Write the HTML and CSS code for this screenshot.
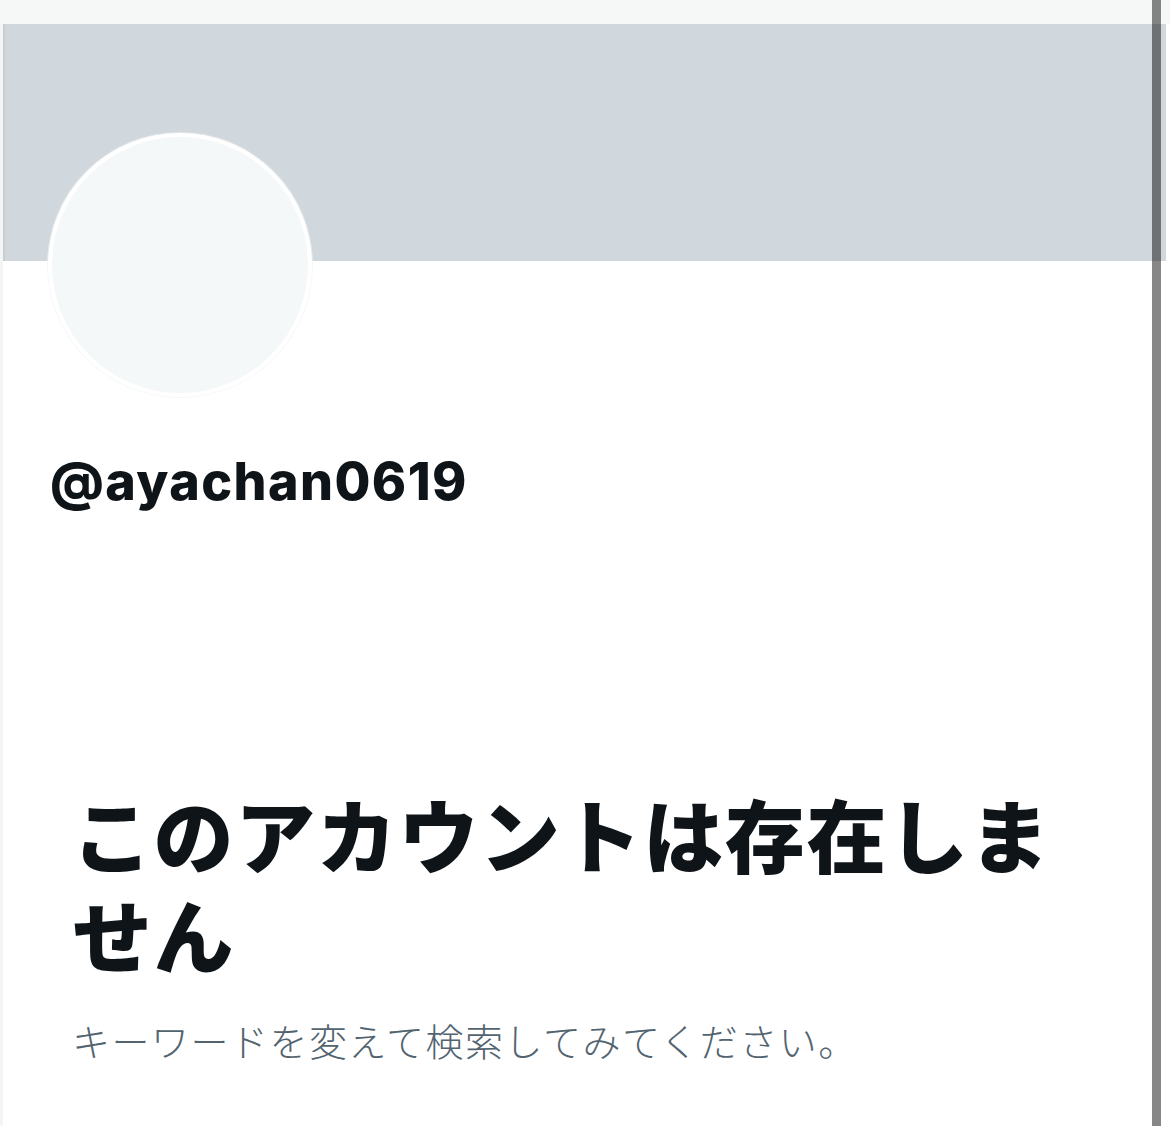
FILE: index.html
```html
<!DOCTYPE html>
<html lang="ja">
<head>
<meta charset="utf-8">
<title>プロフィール</title>
<link rel="stylesheet" href="styles.css">
</head>
<body>
<div class="topbar"></div>
<main class="profile">
  <div class="banner"></div>
  <div class="avatar"></div>
  <div class="handle">@ayachan0619</div>
  <section class="notfound">
    <h1 class="nf-title">このアカウントは存在しません</h1>
    <p class="nf-text">キーワードを変えて検索してみてください。</p>
  </section>
</main>
<div class="scrollbar"></div>
</body>
</html>
```
FILE: styles.css
```css
html, body {
  margin: 0;
  padding: 0;
  background: #ffffff;
}
body {
  width: 1170px;
  height: 1126px;
  overflow: hidden;
  position: relative;
  font-family: "Inter", "Liberation Sans", "Noto Sans CJK JP", sans-serif;
  color: #0f1419;
}
.topbar {
  height: 24px;
  background: #f5f8f7;
}
.profile {
  border-left: 3px solid #f4f6f6;
  margin-right: 4px;
  min-height: 1102px;
}
.banner {
  height: 237px;
  background: #d0d7dd;
  border-left: 2px solid #c9ced3;
}
.avatar {
  width: 256px;
  height: 256px;
  margin-top: -128px;
  margin-left: 45px;
  border-radius: 50%;
  border: 4px solid #ffffff;
  background: #f5f8f8;
  box-shadow: 0 0 0 1px rgba(240, 243, 244, 0.6);
}
.handle {
  margin-top: 53px;
  margin-left: 47px;
  font-family: "Inter", "Liberation Sans", sans-serif;
  font-weight: 800;
  font-size: 52px;
  line-height: 64px;
  letter-spacing: 1.4px;
  color: #0f1419;
}
.notfound {
  padding: 0 60px 0 69px;
  margin-top: 268px;
}
.nf-title {
  margin: 0;
  font-family: "Noto Sans CJK JP", sans-serif;
  font-weight: 900;
  font-size: 80px;
  line-height: 100px;
  letter-spacing: 1.6px;
  color: #0f1419;
}
.nf-text {
  margin: 33px 0 0;
  font-family: "Noto Sans CJK JP", sans-serif;
  font-weight: 300;
  font-size: 38px;
  line-height: 50px;
  letter-spacing: 1.5px;
  color: #536471;
}
.scrollbar {
  position: absolute;
  top: 0;
  left: 1152px;
  width: 9px;
  height: 1126px;
  background: rgba(0, 0, 0, 0.47);
}
```
